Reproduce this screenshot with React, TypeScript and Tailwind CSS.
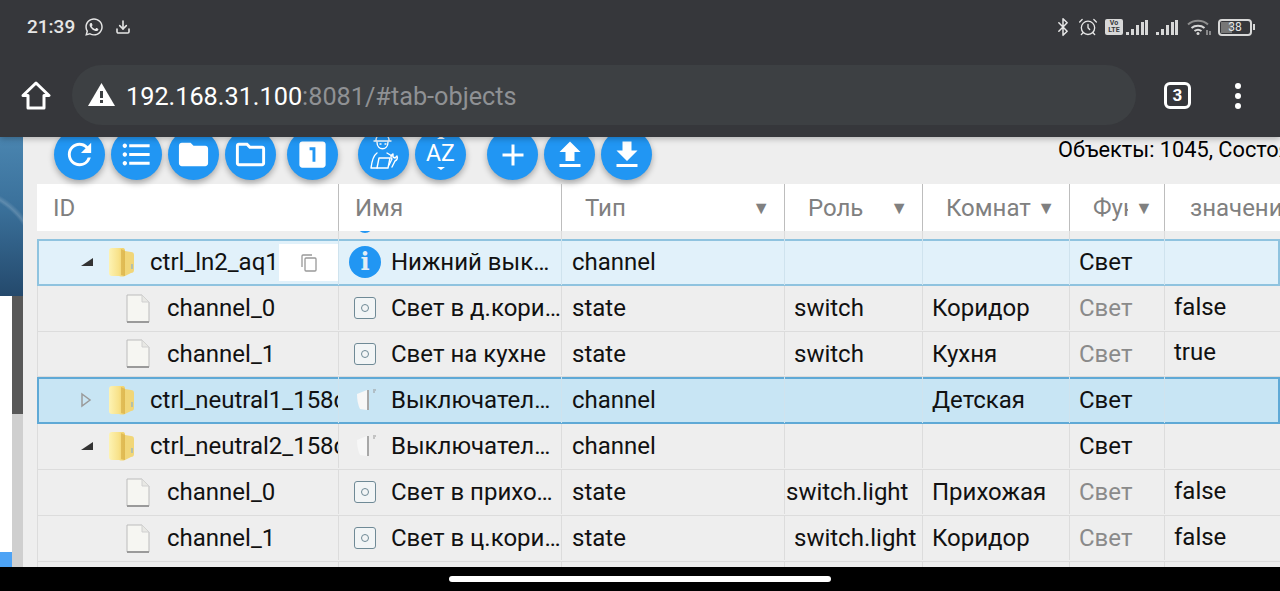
import type { ReactNode } from "react";
import { Bluetooth, AlarmClock, Download } from "lucide-react";
import { FaWhatsapp } from "react-icons/fa";
import {
  MdRefresh,
  MdFormatListBulleted,
  MdFolder,
  MdOutlineFolder,
  MdLooksOne,
  MdAdd,
  MdFileUpload,
  MdFileDownload,
} from "react-icons/md";

const font = "font-['Roboto',sans-serif]";

function Signal() {
  return (
    <svg width="23" height="17" viewBox="0 0 23 17" fill="#d8d8d8">
      <rect x="0" y="13" width="3" height="3" />
      <rect x="5" y="10" width="3" height="6" />
      <rect x="10" y="6" width="3" height="10" />
      <rect x="15" y="3" width="3" height="13" />
      <rect x="19" y="1" width="3" height="15" />
    </svg>
  );
}

function StatusBar() {
  return (
    <div className="flex h-[54px] items-center pl-[27px] pr-[25px] text-[#e6e6e6]">
      <span className="text-[19px] font-medium">21:39</span>
      <FaWhatsapp className="ml-[9px]" size={20} />
      <Download className="ml-[11px]" size={16} strokeWidth={2.4} />
      <div className="ml-auto flex items-center">
        <Bluetooth size={20} strokeWidth={1.8} />
        <AlarmClock className="ml-[5px]" size={20} strokeWidth={1.6} />
        <div className="ml-[7px] flex h-[16px] w-[18px] flex-col items-center justify-center rounded-[2px] bg-[#d8d8d8] text-[7px] font-bold leading-[7px] text-[#36373b]">
          <span>Vo</span>
          <span>LTE</span>
        </div>
        <div className="ml-[3px]">
          <Signal />
        </div>
        <div className="ml-[7px]">
          <Signal />
        </div>
        <svg className="ml-[8px]" width="24" height="18" viewBox="0 0 24 18" fill="none" stroke="#d8d8d8" strokeWidth="2">
          <path d="M1 6.500C6.500 1.500 15.500 1.500 21 6.500" stroke="#8d8d8d" />
          <path d="M4.500 10C8 7 14 7 17.500 10" />
          <path d="M7.500 13C9.500 11.500 12.500 11.500 14.500 13" />
          <circle cx="11" cy="15.500" r="1.500" fill="#d8d8d8" stroke="none" />
          <path d="M20 12v5M23 13v4" strokeWidth="1" />
        </svg>
        <div className="ml-[7px] flex items-center">
          <div className="flex h-[17px] w-[34px] items-center rounded-[4px] border-2 border-[#d8d8d8] p-[1px]">
            <div className="flex h-full w-full items-center justify-center bg-[linear-gradient(90deg,#777_0%,#777_38%,transparent_38%)] text-[12px] leading-none">
              38
            </div>
          </div>
          <div className="ml-[1px] h-[6px] w-[2px] bg-[#d8d8d8]" />
        </div>
      </div>
    </div>
  );
}

function AddressBar() {
  return (
    <div className="flex h-[83px] items-start">
      <svg className="ml-[21px] mt-[27px]" width="30" height="29" viewBox="0 0 30 29" fill="none" stroke="#fff" strokeWidth="3" strokeLinejoin="round">
        <path d="M2 14.500 15 2l13 12.500h-5V27H7V14.500z" />
      </svg>
      <div className="ml-[21px] mt-[11px] flex h-[60px] w-[1064px] items-center rounded-full bg-[#3d4043] pl-[16px]">
        <svg width="27" height="23" viewBox="0 0 27 23" className="-mt-[2px]">
          <path d="M13.500 0 27 23H0z" fill="#fff" />
          <rect x="12" y="8" width="3" height="7" fill="#3d4043" />
          <rect x="12" y="17" width="3" height="3" fill="#3d4043" />
        </svg>
        <span className="ml-[11px] mt-[3px] text-[25.250px] leading-none text-white">
          192.168.31.100<span className="text-[#8f9194]">:8081/#tab-objects</span>
        </span>
      </div>
      <div className="ml-[28px] mt-[28px] flex h-[27px] w-[27px] items-center justify-center rounded-[6px] border-[3px] border-white text-[17px] font-bold text-white">
        3
      </div>
      <div className="ml-[44px] mt-[29px] flex flex-col gap-[4px]">
        <div className="h-[6px] w-[6px] rounded-full bg-white" />
        <div className="h-[6px] w-[6px] rounded-full bg-white" />
        <div className="h-[6px] w-[6px] rounded-full bg-white" />
      </div>
    </div>
  );
}

function RoundButton({ children }: { children: ReactNode }) {
  return (
    <div className="flex h-[51px] w-[51px] shrink-0 items-center justify-center rounded-full bg-[#2196f3] text-white shadow-[0_3px_6px_rgba(0,0,0,0.3)]">
      {children}
    </div>
  );
}

function Toolbar() {
  return (
    <div className="-mt-[8px] mb-[4px] flex h-[51px] items-center pl-[17px]">
      <div className="flex gap-[6px]">
        <RoundButton>
          <MdRefresh size={35} />
        </RoundButton>
        <RoundButton>
          <MdFormatListBulleted size={35} />
        </RoundButton>
        <RoundButton>
          <MdFolder size={35} />
        </RoundButton>
        <RoundButton>
          <MdOutlineFolder size={35} />
        </RoundButton>
      </div>
      <div className="ml-[11px]">
        <RoundButton>
          <MdLooksOne size={35} />
        </RoundButton>
      </div>
      <div className="ml-[20px] flex gap-[6px]">
        <RoundButton>
          <svg width="32" height="42" viewBox="0 0 32 42" fill="none" stroke="#fff" strokeWidth="1.400" strokeLinecap="round" strokeLinejoin="round" className="-mt-[6px]">
            <path d="M8 9c0-7 13-7 13 0M6 10h17" />
            <path d="M9 11c0 9 11 9 11 0" />
            <path d="M12 13h1M17 13h1" />
            <path d="M9 22c-3 2-5 7-6 15h6M19 22l5 3" />
            <path d="M11 27h11l-2 10H9z" />
            <path d="M24 36l3-6c2-1 3-3 2-5l-2 2-2-1v-3c-2 1-3 4-1 5l-3 6" />
          </svg>
        </RoundButton>
        <RoundButton>
          <div className="relative -mt-[3px] flex h-[30px] w-[30px] items-center justify-center text-[23px] leading-none">
            AZ
            <div className="absolute left-[11px] top-[-2px] h-0 w-0 border-x-[4px] border-b-[3px] border-x-transparent border-b-white" />
            <div className="absolute bottom-[-2px] left-[11px] h-0 w-0 border-x-[4px] border-t-[3px] border-x-transparent border-t-white" />
          </div>
        </RoundButton>
      </div>
      <div className="ml-[21px] flex gap-[6px]">
        <RoundButton>
          <MdAdd size={36} />
        </RoundButton>
        <RoundButton>
          <MdFileUpload size={36} />
        </RoundButton>
        <RoundButton>
          <MdFileDownload size={36} />
        </RoundButton>
      </div>
      <span className="ml-[406px] mt-[-9px] shrink-0 whitespace-nowrap text-[21.750px] text-black">
        Объекты: 1045, Состояния: 2345
      </span>
    </div>
  );
}

const colsClass = "grid grid-cols-[302px_223px_223px_138px_147px_95px_115px]";

function HeaderCell({ label, pl, arrow }: { label: string; pl: string; arrow?: boolean }) {
  return (
    <div className={`flex h-full items-center overflow-hidden border-r border-[#bdbdbd] ${pl}`}>
      <span className="overflow-hidden whitespace-nowrap">{label}</span>
      {arrow && <span className="ml-auto mr-[14px] text-[18px] text-[#808080]">▼</span>}
    </div>
  );
}

function TableHeader() {
  return (
    <div className={`${colsClass} h-[47px] bg-white text-[24px] text-[#808080]`}>
      <HeaderCell label="ID" pl="pl-[16px]" />
      <HeaderCell label="Имя" pl="pl-[16px]" />
      <HeaderCell label="Тип" pl="pl-[23px]" arrow />
      <HeaderCell label="Роль" pl="pl-[23px]" arrow />
      <HeaderCell label="Комнат" pl="pl-[23px]" arrow />
      <div className="flex h-full items-center overflow-hidden border-r border-[#bdbdbd] pl-[23px]">
        <span className="w-[35px] shrink-0 overflow-hidden whitespace-nowrap">Функция</span>
        <span className="ml-[7px] text-[18px]">▼</span>
      </div>
      <div className="flex h-full items-center overflow-hidden pl-[25px]">
        <span className="whitespace-nowrap">значение</span>
      </div>
    </div>
  );
}

function PeekRow() {
  return (
    <div className={`${colsClass} h-[8px] text-[0px]`}>
      <div className="border-r border-[#dcdcdc]" />
      <div className="overflow-hidden border-r border-[#dcdcdc] pl-[18px]">
        <div className="-mt-[14px] h-[16px] w-[16px] rounded-full bg-[#2196f3]" />
      </div>
      <div className="border-r border-[#dcdcdc]" />
      <div className="border-r border-[#dcdcdc]" />
      <div className="border-r border-[#dcdcdc]" />
      <div className="border-r border-[#dcdcdc]" />
      <div />
    </div>
  );
}

function FolderIcon() {
  return (
    <svg width="27" height="30" viewBox="0 0 27 30" className="shrink-0">
      <defs>
        <linearGradient id="fold" x1="0" y1="0" x2="1" y2="0">
          <stop offset="0" stopColor="#fdf3b4" />
          <stop offset="0.6" stopColor="#f8e28a" />
          <stop offset="1" stopColor="#efcd62" />
        </linearGradient>
      </defs>
      <path d="M1 4q0-3 3-3h11q2 0 2 3v25q-3 1-6 0H4q-3 0-3-3z" fill="url(#fold)" />
      <path d="M17 4l6 1q3 0 3 3v15q0 3-3 3l-6 3z" fill="#f1d678" />
      <path d="M13 2l4 2v25l-4-1z" fill="#d8b04a" opacity="0.7" />
      <rect x="23" y="17" width="2" height="5" fill="#b5c0a8" />
    </svg>
  );
}

function FileIcon() {
  return (
    <svg width="24" height="29" viewBox="0 0 24 29" className="shrink-0">
      <path d="M1 1h15l7 7v20H1z" fill="#f6f6f2" stroke="#bcbcbc" strokeWidth="1" />
      <path d="M16 1v7h7" fill="#e8e8e4" stroke="#d0d0d0" strokeWidth="1" />
      <path d="M1 28h22" stroke="#9a9a9a" strokeWidth="2" />
    </svg>
  );
}

function StateIcon() {
  return (
    <div className="ml-[15px] flex h-[22px] w-[22px] shrink-0 items-center justify-center rounded-[3px] border border-[#6f8a96] bg-[#f2f5f6]">
      <div className="h-[8px] w-[8px] rounded-full border border-[#6f8a96]" />
    </div>
  );
}

function SwitchIcon() {
  return (
    <svg width="24" height="26" viewBox="0 0 24 26" className="ml-[17px] mr-[-3px] shrink-0">
      <path d="M1 7l10-4v20l-7-1q-3-6-3-15z" fill="#f7f7f7" />
      <path d="M11 3l2 0v20h-2z" fill="#a8a8a8" />
      <path d="M17 3h3M17 5h2" stroke="#999" strokeWidth="1" />
    </svg>
  );
}

function InfoIcon() {
  return (
    <div className="ml-[10px] flex h-[32px] w-[32px] shrink-0 items-center justify-center rounded-full bg-[#2196f3] font-['DejaVu_Serif',serif] text-[24px] font-bold leading-none text-[#e3eef5]">
      i
    </div>
  );
}

type RowKind = "channel" | "state";

type Row = {
  id: string;
  kind: RowKind;
  open?: boolean;
  height: string;
  nameIcon: "info" | "state" | "switch";
  name: string;
  type: string;
  role?: string;
  rolePl?: string;
  room?: string;
  value?: string;
  selected?: "light" | "strong";
  copy?: boolean;
};

const rows: Row[] = [
  { id: "ctrl_ln2_aq1", kind: "channel", open: true, height: "h-[47px]", nameIcon: "info", name: "Нижний выключатель", type: "channel", selected: "light", copy: true },
  { id: "channel_0", kind: "state", height: "h-[46px]", nameIcon: "state", name: "Свет в д.коридоре", type: "state", role: "switch", room: "Коридор", value: "false" },
  { id: "channel_1", kind: "state", height: "h-[45px]", nameIcon: "state", name: "Свет на кухне", type: "state", role: "switch", room: "Кухня", value: "true" },
  { id: "ctrl_neutral1_158d0001", kind: "channel", height: "h-[47px]", nameIcon: "switch", name: "Выключатель детская", type: "channel", room: "Детская", selected: "strong" },
  { id: "ctrl_neutral2_158d0001", kind: "channel", open: true, height: "h-[46px]", nameIcon: "switch", name: "Выключатель прихожая", type: "channel" },
  { id: "channel_0", kind: "state", height: "h-[46px]", nameIcon: "state", name: "Свет в прихожей", type: "state", role: "switch.light", rolePl: "pl-[1px]", room: "Прихожая", value: "false" },
  { id: "channel_1", kind: "state", height: "h-[46px]", nameIcon: "state", name: "Свет в ц.коридоре", type: "state", role: "switch.light", room: "Коридор", value: "false" },
];

function TableRow({ row }: { row: Row }) {
  const isChannel = row.kind === "channel";
  const rowClass =
    row.selected === "light"
      ? "bg-[#e1f1fa] pb-[1px] shadow-[inset_0_0_0_2px_#8fc3df]"
      : row.selected === "strong"
        ? "bg-[#c8e5f4] pb-[1px] shadow-[inset_0_0_0_2px_#5fa9d6]"
        : "border-b border-[#dcdcdc] bg-[#eeeeee] pb-[1px] shadow-[inset_1px_0_0_#dcdcdc]";
  const divider = row.selected ? "border-r border-[#cfe3ee]" : "border-r border-[#dcdcdc]";

  return (
    <div className={`${colsClass} ${row.height} ${rowClass} items-stretch text-[24px] text-[#111]`}>
      <div className={`relative flex items-center overflow-hidden ${divider} ${isChannel ? "pl-[43px]" : "pl-[89px]"}`}>
        {isChannel &&
          (row.open ? (
            <svg width="14" height="10" viewBox="0 0 14 10" className="mr-[14px] shrink-0">
              <path d="M13 1v8H1z" fill="#333" />
            </svg>
          ) : (
            <svg width="12" height="16" viewBox="0 0 12 16" className="mr-[16px] shrink-0" fill="none" stroke="#9a9a9a" strokeWidth="1.500">
              <path d="M2 2l8 6-8 6z" />
            </svg>
          ))}
        {isChannel ? <FolderIcon /> : <FileIcon />}
        <span className={`whitespace-nowrap ${isChannel ? "ml-[15px]" : "ml-[17px]"}`}>{row.id}</span>
        {row.copy && (
          <div className="absolute right-0 top-[5px] flex h-[37px] w-[59px] items-center justify-center bg-white">
            <svg width="16" height="18" viewBox="0 0 16 18" fill="none" stroke="#999" strokeWidth="1.300">
              <rect x="4" y="4" width="11" height="13" rx="1" />
              <path d="M1 13V2q0-1 1-1h9" />
            </svg>
          </div>
        )}
      </div>
      <div className={`flex min-w-0 items-center ${divider}`}>
        {row.nameIcon === "info" && <InfoIcon />}
        {row.nameIcon === "state" && <StateIcon />}
        {row.nameIcon === "switch" && <SwitchIcon />}
        <span className={`truncate ${row.nameIcon === "state" ? "ml-[15px]" : row.nameIcon === "switch" ? "ml-[14px]" : "ml-[10px]"} ${row.nameIcon === "state" ? "" : "pr-[9px]"}`}>
          {row.name}
        </span>
      </div>
      <div className={`flex items-center ${divider} pl-[10px]`}>{row.type}</div>
      <div className={`flex items-center overflow-hidden whitespace-nowrap ${divider} ${row.rolePl ?? "pl-[9px]"}`}>{row.role}</div>
      <div className={`flex items-center ${divider} pl-[9px]`}>{row.room}</div>
      <div className={`flex items-center ${divider} pl-[9px] ${isChannel ? "" : "text-[#8a8a8a]"}`}>Свет</div>
      <div className="flex items-center pb-[3px] pl-[9px]">{row.value}</div>
    </div>
  );
}

function SideStrip() {
  return (
    <div className="flex w-[23px] shrink-0 flex-col">
      <div className="h-[159px] bg-[radial-gradient(circle_at_-40px_130px,transparent_75px,rgba(255,255,255,0.18)_78px,transparent_82px),linear-gradient(180deg,#4a85b0_0%,#3a709a_45%,#24496c_100%)]" />
      <div className="flex min-h-0 flex-1">
        <div className="flex w-[12px] flex-col justify-end bg-white">
          <div className="h-[15px] bg-[#4da3f5]" />
        </div>
        <div className="flex w-[11px] flex-col">
          <div className="h-[118px] bg-[#585858]" />
          <div className="flex-1 bg-[#cfcfcf]" />
        </div>
      </div>
    </div>
  );
}

export default function App() {
  return (
    <div className={`flex h-[591px] w-[1280px] flex-col overflow-hidden bg-black ${font}`}>
      <header className="relative z-10 h-[137px] shrink-0 bg-[#36373b] shadow-[0_2px_6px_rgba(0,0,0,0.25)]">
        <StatusBar />
        <AddressBar />
      </header>

      <main className="flex min-h-0 flex-1 overflow-hidden bg-[#eeeeee]">
        <SideStrip />
        <div className="min-w-0 flex-1 overflow-hidden pl-[14px]">
          <Toolbar />
          <TableHeader />
          <PeekRow />
          {rows.map((row, i) => (
            <TableRow key={i} row={row} />
          ))}
          <div className={`${colsClass} h-[6px] shadow-[inset_1px_0_0_#dcdcdc]`}>
            <div className="border-r border-[#dcdcdc]" />
            <div className="border-r border-[#dcdcdc]" />
            <div className="border-r border-[#dcdcdc]" />
            <div className="border-r border-[#dcdcdc]" />
            <div className="border-r border-[#dcdcdc]" />
            <div className="border-r border-[#dcdcdc]" />
            <div />
          </div>
        </div>
      </main>

      <nav className="flex h-[24px] shrink-0 items-center justify-center bg-black">
        <div className="h-[6px] w-[382px] rounded-full bg-white" />
      </nav>
    </div>
  );
}
